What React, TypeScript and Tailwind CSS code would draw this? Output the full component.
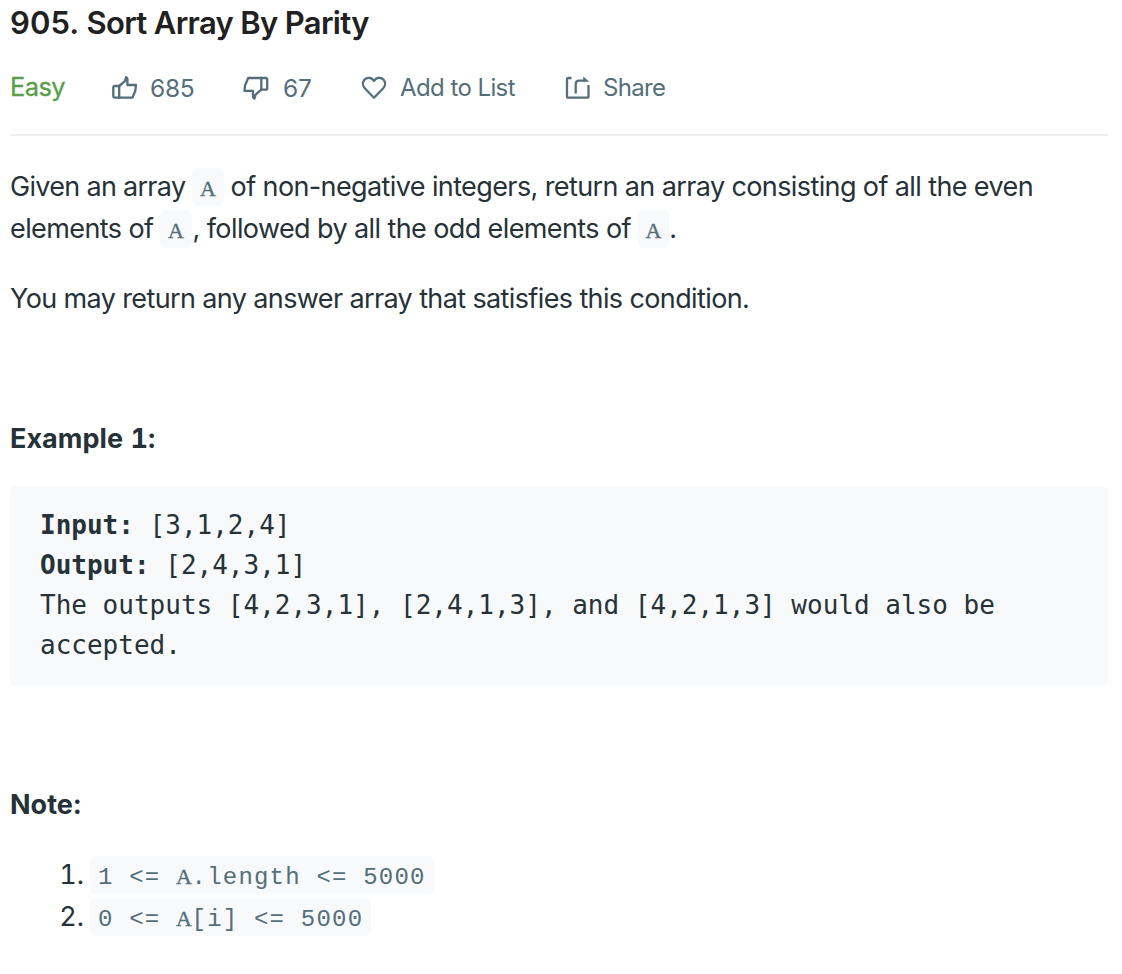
import type { ReactNode } from "react";

const iconProps = {
  fill: "none",
  stroke: "currentColor",
  strokeWidth: 2.3,
  strokeLinejoin: "round" as const,
  strokeLinecap: "round" as const,
};

function ThumbUp() {
  return (
    <svg className="block h-[26px] w-[26px]" viewBox="0 0 26 26" {...iconProps}>
      <path d="M2.8 11 H7.2 V22.6 H2.8 Q1.3 22.6 1.3 21.1 V12.5 Q1.3 11 2.8 11 Z" />
      <path d="M7.2 11 L13 6.2 L14 2.2 L15.4 3.4 V10 H23.9 L23.4 15.5 L20.5 22.6 H7.2" />
    </svg>
  );
}

function ThumbDown() {
  return (
    <svg className="block h-[26px] w-[26px]" viewBox="0 0 26 26" {...iconProps}>
      <path d="M18.3 3 H22.7 Q24.2 3 24.2 4.5 V13.2 Q24.2 14.7 22.7 14.7 H18.3 Z" />
      <path d="M18.3 3 H5.2 L2 10.5 L1.5 15.9 H10 V22.2 L11.4 23.6 L12.6 19.6 L18.3 14.7" />
    </svg>
  );
}

function Heart() {
  return (
    <svg className="block h-[26px] w-[26px]" viewBox="0 0 26 26" {...iconProps}>
      <path d="M13 22.7 L4 13.5 C1.6 11 1.3 7.5 3.2 5 C5.8 1.9 10.8 2.3 13 6 C15.2 2.3 20.2 1.9 22.8 5 C24.7 7.5 24.4 11 22 13.5 Z" />
    </svg>
  );
}

function ShareIcon() {
  return (
    <svg className="block h-[26px] w-[26px]" viewBox="0 0 26 26" {...iconProps} strokeLinecap="butt">
      <path d="M6.5 3 H3.5 Q2 3 2 4.5 V21.2 Q2 22.7 3.5 22.7 H22 Q23.5 22.7 23.5 21.2 V10" />
      <path d="M10.7 18.5 V9.2 Q10.7 5.7 14.2 5.7 H20" />
      <path d="M18.5 2 L23.8 6.6 H18.5 Z" fill="currentColor" strokeWidth="0.5" />
    </svg>
  );
}

function SlabA() {
  return (
    <span className="inline-block w-[15.6px] text-center font-['Liberation_Serif',serif] text-[22px] leading-none tracking-normal [-webkit-text-stroke:0.35px_currentColor]">
      A
    </span>
  );
}

function Code({ children }: { children: ReactNode }) {
  return (
    <code className="block h-[38px] rounded-[6px] bg-[#f7f9fa] px-2 font-['Liberation_Mono',monospace] text-[24px] leading-[43px] tracking-[1.2px] whitespace-pre text-[#546e7a]">
      {children}
    </code>
  );
}

export default function App() {
  return (
    <main className="h-[974px] w-[1122px] overflow-hidden bg-white pr-[14px] pl-[10px] font-['Inter',sans-serif] text-[27px] leading-[42px] text-[#263238]">
      <h1 className="h-[66px] pt-[2px] text-[31px] font-semibold tracking-[-0.67px] whitespace-nowrap text-[#212121]">
        <span className="tracking-[0.1px]">905.</span> Sort Array By Parity
      </h1>
      <div className="flex h-[44px] items-center text-[24.5px] whitespace-nowrap text-[#546e7a]">
        <span className="-mt-[2px] w-[102px] text-[25.5px] tracking-[-0.6px] text-[#5a9e4b] [-webkit-text-stroke:0.3px_currentColor]">Easy</span>
        <ThumbUp />
        <span className="ml-[12px] w-[93px] tracking-[-0.3px]">685</span>
        <ThumbDown />
        <span className="ml-[14px] w-[78px] tracking-[-0.1px]">67</span>
        <Heart />
        <span className="ml-[13px] w-[165px] text-[24px] tracking-[-0.58px]">Add to List</span>
        <ShareIcon />
        <span className="ml-[12px] text-[24px] tracking-[-0.7px]">Share</span>
      </div>
      <div className="mt-6 h-[2px] bg-[#eeeeee]" />

      <section className="mt-[30px] whitespace-nowrap">
        <div className="flex h-[42px] items-center">
          <span className="w-[182px] tracking-[-0.7px]">Given an array</span>
          <Code><SlabA /></Code>
          <span className="ml-[7px] tracking-[-0.61px]">
            of non-negative integers, return an array consisting of all the even
          </span>
        </div>
        <div className="flex h-[42px] items-center">
          <span className="w-[150px] tracking-[-0.6px]">elements of</span>
          <Code><SlabA /></Code>
          <span className="w-[446px] pl-px tracking-[-0.6px]">, followed by all the odd elements of</span>
          <Code><SlabA /></Code>
          <span>.</span>
        </div>
      </section>
      <p className="mt-7 tracking-[-0.62px] whitespace-nowrap">
        You may return any answer array that satisfies this condition.
      </p>
      <h2 className="mt-[98px] text-[27px] font-bold tracking-[0.05px] tabular-nums">Example 1:</h2>
      <pre className="mt-[26px] h-[200px] rounded-[6px] bg-[#f7f9fa] px-[30px] pt-[19px] font-['DejaVu_Sans_Mono',monospace] text-[26px] leading-[40px] whitespace-pre-wrap">
        <strong className="font-bold">Input:</strong>
        {" [3,1,2,4]\n"}
        <strong className="font-bold">Output:</strong>
        {" [2,4,3,1]\nThe outputs [4,2,3,1], [2,4,1,3], and [4,2,1,3] would also be accepted."}
      </pre>
      <h2 className="mt-[98px] text-[27px] font-bold tracking-[0px]">Note:</h2>
      <ol className="mt-[28px]">
        <li className="flex h-[42px] items-center">
          <span className="w-[74px] text-right tabular-nums">1.</span>
          <span className="ml-[6px] flex"><Code>{"1 <= "}<SlabA />{".length <= 5000"}</Code></span>
        </li>
        <li className="flex h-[42px] items-center">
          <span className="w-[74px] text-right tabular-nums">2.</span>
          <span className="ml-[6px] flex"><Code>{"0 <= "}<SlabA />{"[i] <= 5000"}</Code></span>
        </li>
      </ol>
    </main>
  );
}
